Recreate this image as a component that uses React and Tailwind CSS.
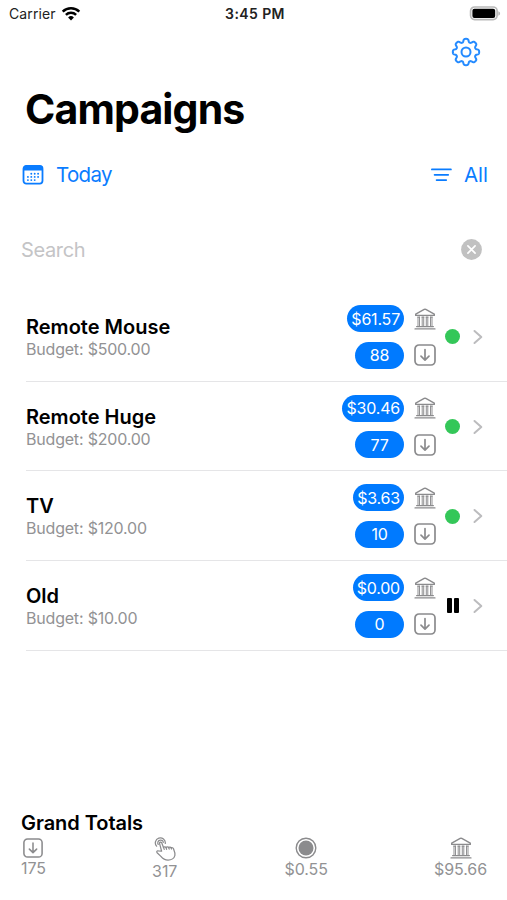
import { useState } from 'react';

const CAMPAIGNS = [
  { name: 'Remote Mouse', budget: '$500.00', spend: '$61.57', installs: '88', active: true },
  { name: 'Remote Huge', budget: '$200.00', spend: '$30.46', installs: '77', active: true },
  { name: 'TV', budget: '$120.00', spend: '$3.63', installs: '10', active: true },
  { name: 'Old', budget: '$10.00', spend: '$0.00', installs: '0', active: false },
];

// outline with eight rounded teeth
const GEAR_PATH =
  Array.from({ length: 192 }, (_, i) => {
    const a = (i / 192) * Math.PI * 2;
    const r = 11.5 + 1.7 * Math.tanh(1.7 * Math.cos(8 * a) + 0.4);
    return `${i ? 'L' : 'M'}${(15 + r * Math.cos(a)).toFixed(2)} ${(15 + r * Math.sin(a)).toFixed(2)}`;
  }).join('') + 'Z';

function GearIcon() {
  return (
    <svg viewBox="0 0 30 30" className="w-[30px] h-[30px]" fill="none" stroke="currentColor" strokeWidth="2" strokeLinejoin="round">
      <path d={GEAR_PATH} />
      <circle cx="15" cy="15" r="4.5" />
    </svg>
  );
}

function WifiIcon() {
  return (
    <svg viewBox="0 0 20 16" className="w-5 h-4" fill="none" stroke="#000" strokeWidth="2.5">
      <path d="M1.7 5.7a11.9 11.9 0 0 1 16.6 0" />
      <path d="M4.9 8.9a7.3 7.3 0 0 1 10.2 0" />
      <path d="M10 14.4 7.1 11.5a4.1 4.1 0 0 1 5.8 0Z" fill="#000" stroke="none" />
    </svg>
  );
}

function BatteryIcon() {
  return (
    <svg viewBox="0 0 32 16" className="w-8 h-4">
      <rect x="1.6" y="1" width="26.5" height="12.6" rx="4" fill="#fff" stroke="#b9b9b9" strokeWidth="1.7" />
      <rect x="3.4" y="2.7" width="22.8" height="9.2" rx="2" fill="#000" />
      <path d="M29.3 5.2c1.3.5 1.8 1.3 1.8 2.3s-.5 1.8-1.8 2.3Z" fill="#b9b9b9" />
    </svg>
  );
}

const DOTS = [
  [9.6, 9.1], [13, 9.1], [16.4, 9.1],
  [6.2, 12.3], [9.6, 12.3], [13, 12.3], [16.4, 12.3],
  [6.2, 15.5], [9.6, 15.5], [13, 15.5],
];

function CalendarIcon() {
  return (
    <svg viewBox="0 0 22 20" className="w-[22px] h-5">
      <rect x="1.5" y="1" width="19" height="17.6" rx="2.8" fill="none" stroke="currentColor" strokeWidth="1.8" />
      <path d="M1 5.4V4a3.4 3.4 0 0 1 3.4-3.4h13.2A3.4 3.4 0 0 1 21 4v1.4Z" fill="currentColor" />
      {DOTS.map(([x, y]) => (
        <circle key={`${x}-${y}`} cx={x - 0.3} cy={y - 0.4} r="0.95" fill="currentColor" />
      ))}
    </svg>
  );
}

function FilterIcon() {
  return (
    <svg viewBox="0 0 22 16" className="w-[22px] h-4" stroke="currentColor" strokeWidth="1.8" strokeLinecap="round">
      <path d="M1.9 2.4h19M4.6 7.8h13.6M6.6 13.1h9.6" />
    </svg>
  );
}

function ClearIcon() {
  return (
    <svg viewBox="0 0 22 22" className="w-[22px] h-[22px]">
      <circle cx="10.5" cy="10.5" r="10.4" fill="#c1c1c1" />
      <path d="m6.9 6.9 7.2 7.2m0-7.2-7.2 7.2" stroke="#fff" strokeWidth="1.7" strokeLinecap="round" />
    </svg>
  );
}

function BankIcon() {
  return (
    <svg viewBox="0 0 22 22" className="w-[22px] h-[22px]" fill="none" stroke="#8b8b8d" strokeWidth="1.4" strokeLinejoin="round" strokeLinecap="round">
      <path d="M1.7 6.2 10.2 1.4q.8-.4 1.6 0l8.5 4.8v1.2H1.7Z" />
      <path d="M3.8 9.2h1.9M8 9.2h1.9M12.1 9.2H14M16.3 9.2h1.9" strokeWidth="1" />
      <path d="M4 9v9.3M5.5 9v9.3M8.2 9v9.3M9.7 9v9.3M12.3 9v9.3M13.8 9v9.3M16.5 9v9.3M18 9v9.3" strokeWidth=".95" />
      <path d="M2.6 18.6h16.8M1 20.9h20" strokeWidth="1.2" />
    </svg>
  );
}

function InstallIcon({ className }) {
  return (
    <svg viewBox="0 0 22 22" className={className} fill="none" stroke="#8b8b8d" strokeWidth="1.7" strokeLinecap="round" strokeLinejoin="round">
      <rect x="1" y="1" width="20" height="20" rx="4" />
      <path d="M11 5.6v10.3M7 12.2l4 3.9 4-3.9" />
    </svg>
  );
}

function TapIcon() {
  return (
    <svg viewBox="0 0 22 25" className="w-[22px] h-[25px]" fill="none" stroke="#8b8b8d" strokeWidth="1.25" strokeLinecap="round" strokeLinejoin="round">
      <path d="M2.6 9.2A5 5 0 1 1 11.3 6.4" />
      <path d="M4.2 7.4a2.8 2.8 0 0 1 2-4.3c1.6-.3 2.9.8 3.1 2.2" />
      <path d="M7.6 14.2 5.6 6.6c-.4-1.5 1.5-2.2 2.1-.8l1.8 4.6c.5-.8 2.1-.8 2.5.2.5-1 2.2-1 2.6 0 .5-.8 2.1-.8 2.5.3.9-.5 2-.2 2.4.8.9 2.2 1.8 4.5 1.4 6.6-.6 2.8-3.6 4.8-6.8 4.8-3.2 0-5.4-1.4-7.2-3.7l-3.8-3.7c-.9-1 0-2.3 1.2-1.8Z" />
      <path d="m9.5 10.4.7 2M12 10.6l.6 1.7M14.6 10.6l.6 1.5M17.1 10.9l.4 1.1" />
    </svg>
  );
}

function CoinIcon() {
  return (
    <svg viewBox="0 0 22 22" className="w-[22px] h-[22px]">
      <circle cx="11" cy="11" r="9.8" fill="none" stroke="#8b8b8d" strokeWidth="1.4" />
      <circle cx="11" cy="11" r="7.5" fill="#8b8b8d" />
    </svg>
  );
}

function Pill({ children }) {
  return (
    <span className="flex h-[27px] min-w-[49px] items-center justify-center rounded-full bg-[#007aff] px-1 text-[16px] leading-none tracking-[-0.2px] text-white">
      {children}
    </span>
  );
}

function CampaignRow({ campaign }) {
  return (
    <div className="flex h-[89.7px] items-center border-b-[1.5px] border-[#e5e5e7] pt-px">
      <div className="flex-1 pt-px">
        <h2 className="text-[20px] leading-[23px] font-semibold tracking-normal text-black">{campaign.name}</h2>
        <p className="text-[16px] leading-[20px] tracking-[-0.2px] text-[#929294]">Budget: {campaign.budget}</p>
      </div>
      <div className="grid grid-cols-[auto_22px] items-center justify-items-end gap-x-[9.5px] gap-y-[9.5px]">
        <Pill>{campaign.spend}</Pill>
        <BankIcon />
        <Pill>{campaign.installs}</Pill>
        <InstallIcon className="w-[22px] h-[22px]" />
      </div>
      <div className="ml-[9px] flex w-4 justify-center">
        {campaign.active ? (
          <span className="size-[15px] rounded-full bg-[#34c759]" />
        ) : (
          <span className="flex gap-[2px]">
            <span className="h-[15px] w-[5px] rounded-[1px] bg-black" />
            <span className="h-[15px] w-[5px] rounded-[1px] bg-black" />
          </span>
        )}
      </div>
      <svg viewBox="0 0 10 16" className="mr-[24.5px] ml-[12px] h-4 w-[10px]" fill="none" stroke="#bcbcbe" strokeWidth="2" strokeLinecap="round" strokeLinejoin="round">
        <path d="m1.5 2 6.8 6-6.8 6" />
      </svg>
    </div>
  );
}

export default function App() {
  const [query, setQuery] = useState('');

  return (
    <div className="flex h-[900px] w-[507px] flex-col overflow-hidden bg-white font-['Inter',sans-serif]">
      {/* Status bar */}
      <div className="grid h-[27px] grid-cols-3 items-center pr-[6px] pl-[9px] text-[14px] text-[#222]">
        <div className="flex items-center gap-[5px]">
          <span className="tracking-[0.1px]">Carrier</span>
          <WifiIcon />
        </div>
        <span className="text-center font-semibold tracking-[0.4px]">3:45 PM</span>
        <div className="flex justify-end">
          <BatteryIcon />
        </div>
      </div>

      <div className="flex h-[50px] items-center justify-end pr-[26px] text-[#258bff]">
        <GearIcon />
      </div>

      <h1 className="pt-[6px] pl-[25px] text-[41px] leading-[52px] font-bold tracking-[-0.85px] text-black">Campaigns</h1>

      {/* Date and filter */}
      <div className="flex h-[80px] items-center justify-between pr-[19px] pl-[22px] text-[20.5px] text-[#0a7cff]">
        <button className="flex items-center gap-[12px]">
          <CalendarIcon />
          <span className="pt-px tracking-[-0.65px]">Today</span>
        </button>
        <button className="flex items-center gap-[12px]">
          <FilterIcon />
          <span className="pt-px">All</span>
        </button>
      </div>

      <div className="flex h-[70px] items-center pr-[24px] pl-[21px]">
        <input
          value={query}
          onChange={e => setQuery(e.target.value)}
          placeholder="Search"
          className="min-w-0 flex-1 text-[20px] tracking-[-0.35px] outline-none placeholder:text-[#c4c4c6]"
        />
        <button onClick={() => setQuery('')}>
          <ClearIcon />
        </button>
      </div>

      {/* Campaign list */}
      <div className="mt-[7px] pl-[26px]">
        {CAMPAIGNS.map(c => (
          <CampaignRow key={c.name} campaign={c} />
        ))}
      </div>

      {/* Grand totals */}
      <div className="mt-auto h-[90px] pr-[20px] pl-[21px]">
        <h2 className="text-[20px] leading-[26px] font-semibold tracking-[-0.05px] text-black">Grand Totals</h2>
        <div className="flex items-start justify-between pt-px text-[16px] leading-[20px] tracking-[-0.1px] text-[#929294]">
          <div className="flex flex-col items-center pt-px">
            <InstallIcon className="w-5 h-5" />
            <span>175</span>
          </div>
          <div className="flex flex-col items-center">
            <TapIcon />
            <span className="-mt-px">317</span>
          </div>
          <div className="flex flex-col items-center pl-px">
            <CoinIcon />
            <span>$0.55</span>
          </div>
          <div className="flex flex-col items-center">
            <BankIcon />
            <span>$95.66</span>
          </div>
        </div>
      </div>
    </div>
  );
}
